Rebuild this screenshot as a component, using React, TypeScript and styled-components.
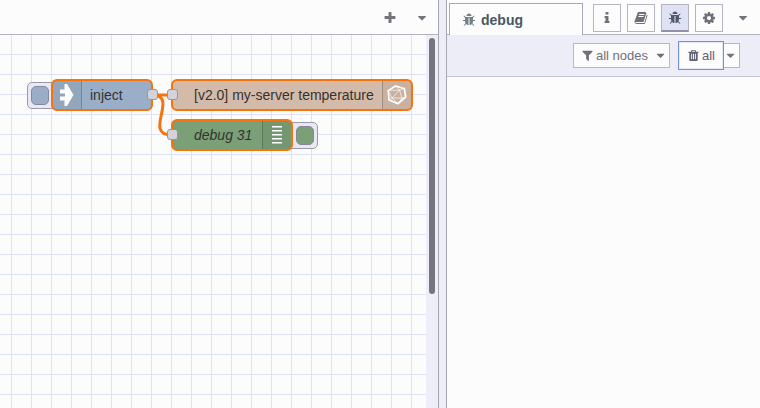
import React from "react";
import styled, { createGlobalStyle } from "styled-components";

const GlobalStyle = createGlobalStyle`
  *, *::before, *::after { box-sizing: border-box; }
  body { margin: 0; background: #fcfcfc; font-family: "Liberation Sans", Arial, sans-serif; }
`;

const paths = {
  plus: "M1600 736v192q0 40-28 68t-68 28h-416v416q0 40-28 68t-68 28h-192q-40 0-68-28t-28-68v-416h-416q-40 0-68-28t-28-68v-192q0-40 28-68t68-28h416v-416q0-40 28-68t68-28h192q40 0 68 28t28 68v416h416q40 0 68 28t28 68z",
  caret: "M1408 704q0 26-19 45l-448 448q-19 19-45 19t-45-19l-448-448q-19-19-19-45t19-45 45-19h896q26 0 45 19t19 45z",
  bug: "M1696 960q0 26-19 45t-45 19h-224q0 171-67 290l208 209q19 19 19 45t-19 45q-18 19-45 19t-45-19l-198-197q-5 5-15 13t-42 28.5-65 36.5-82 29-97 13v-896h-128v896q-51 0-101.5-13.5t-87-33-66-39-43.5-32.5l-15-14-183 207q-20 21-48 21-24 0-43-16-19-18-20.5-44.5t15.5-46.5l202-227q-58-114-58-274h-224q-26 0-45-19t-19-45 19-45 45-19h224v-294l-173-173q-19-19-19-45t19-45 45-19 45 19l173 173h844l173-173q19-19 45-19t45 19 19 45-19 45l-173 173v294h224q26 0 45 19t19 45zm-480-576h-640q0-133 93.5-226.5t226.5-93.5 226.5 93.5 93.5 226.5z",
  info: "M1216 1344v128q0 26-19 45t-45 19h-512q-26 0-45-19t-19-45v-128q0-26 19-45t45-19h64v-384h-64q-26 0-45-19t-19-45v-128q0-26 19-45t45-19h384q26 0 45 19t19 45v576h64q26 0 45 19t19 45zm-128-1152v192q0 26-19 45t-45 19h-256q-26 0-45-19t-19-45v-192q0-26 19-45t45-19h256q26 0 45 19t19 45z",
  cog: "M1152 896q0-106-75-181t-181-75-181 75-75 181 75 181 181 75 181-75 75-181zm512-109v222q0 12-8 23t-20 13l-185 28q-19 54-39 91 35 50 107 138 10 12 10 25t-9 23q-27 37-99 108t-94 71q-12 0-26-9l-138-108q-44 23-91 38-16 136-29 186-7 28-36 28h-222q-14 0-24.5-8.5t-11.5-21.5l-28-184q-49-16-90-37l-141 107q-10 9-25 9-14 0-25-11-126-114-165-168-7-10-7-23 0-12 8-23 15-21 51-66.5t54-70.5q-27-50-41-99l-183-27q-13-2-21-12.5t-8-23.5v-222q0-12 8-23t19-13l186-28q14-46 39-92-40-57-107-138-10-12-10-24 0-10 9-23 26-36 98.5-107.5t94.5-71.5q13 0 26 10l138 107q44-23 91-38 16-136 29-186 7-28 36-28h222q14 0 24.5 8.5t11.5 21.5l28 184q49 16 90 37l142-107q9-9 24-9 13 0 25 10 129 119 165 170 7 8 7 22 0 12-8 23-15 21-51 66.5t-54 70.5q26 50 41 98l183 28q13 2 21 12.5t8 23.5z",
  trash: "M704 1376v-704q0-14-9-23t-23-9h-64q-14 0-23 9t-9 23v704q0 14 9 23t23 9h64q14 0 23-9t9-23zm256 0v-704q0-14-9-23t-23-9h-64q-14 0-23 9t-9 23v704q0 14 9 23t23 9h64q14 0 23-9t9-23zm256 0v-704q0-14-9-23t-23-9h-64q-14 0-23 9t-9 23v704q0 14 9 23t23 9h64q14 0 23-9t9-23zm-544-992h448l-48-117q-7-9-17-11h-317q-10 2-17 11zm928 32v64q0 14-9 23t-23 9h-96v948q0 83-47 143.5t-113 60.5h-832q-66 0-113-58.5t-47-141.5v-952h-96q-14 0-23-9t-9-23v-64q0-14 9-23t23-9h309l70-167q15-37 54-63t79-26h320q40 0 79 26t54 63l70 167h309q14 0 23 9t9 23z",
  filter: "M1595 295q17 41-14 70l-493 493v742q0 42-39 59-13 5-25 5-27 0-45-19l-256-256q-19-19-19-45v-486l-493-493q-31-29-14-70 17-39 59-39h1280q42 0 59 39z",
  book: "M1703 478q40 57 18 129l-275 906q-19 64-76.5 107.5t-122.5 43.5h-923q-77 0-148.5-53.5t-99.5-131.5q-24-67-2-127 0-4 3-27t4-37q1-8-3-21.5t-3-19.5q2-11 8-21t16.5-23.5 16.5-23.5q23-38 45-91.5t30-91.5q3-10 .5-30t-.5-28q3-11 17-28t17-23q21-36 42-92t25-90q1-9-2.5-32t.5-28q4-13 22-30.5t22-22.5q19-26 42.5-84.5t27.5-96.5q1-8-3-25.5t-2-26.5q2-8 9-18t18-23 17-21q8-12 16.5-30.5t15-35 16-36 19.5-32 26.5-23.5 36-11.5 47.5 5.5l-1 3q38-9 51-9h761q74 0 114 56t18 130l-274 906q-36 119-71.5 153.5t-128.5 34.5h-869q-27 0-38 15-11 16-1 43 24 70 144 70h923q29 0 56-15.5t35-41.5l300-987q7-22 5-57 38 15 59 43zm-1064 2q-4 13 2 22.5t20 9.5h608q13 0 25.5-9.5t16.5-22.5l21-64q4-13-2-22.5t-20-9.5h-608q-13 0-25.5 9.5t-16.5 22.5zm-83 256q-4 13 2 22.5t20 9.5h608q13 0 25.5-9.5t16.5-22.5l21-64q4-13-2-22.5t-20-9.5h-608q-13 0-25.5 9.5t-16.5 22.5z",
};

const Glyph = styled.svg`
  display: block;
  flex: none;
  fill: currentColor;
`;

function Icon({ name, size = 14 }: { name: keyof typeof paths; size?: number }) {
  return (
    <Glyph width={size} height={size} viewBox="0 0 1792 1792" aria-hidden="true">
      <path d={paths[name]} />
    </Glyph>
  );
}

const Editor = styled.div`
  display: grid;
  grid-template-columns: 438px 9px 1fr;
  width: 760px;
  height: 408px;
  overflow: hidden;
`;

const Workspace = styled.main`
  display: flex;
  flex-direction: column;
  min-width: 0;
`;

const WorkspaceTabs = styled.header`
  display: flex;
  align-items: center;
  justify-content: flex-end;
  height: 35px;
  flex: none;
  border-bottom: 1px solid #b3b3c0;
  color: #74747f;
`;

const TabAction = styled.button`
  display: flex;
  align-items: center;
  justify-content: center;
  width: 32px;
  height: 34px;
  padding: 2px 0 0;
  border: 0;
  background: none;
  color: inherit;
`;

const WorkspaceBody = styled.div`
  display: flex;
  flex: 1;
`;

const Canvas = styled.div`
  position: relative;
  width: 426px;
  background-color: #fcfcfc;
  background-image:
    linear-gradient(to right, #e0e1ee 1px, transparent 1px),
    linear-gradient(to bottom, #dde2f6 1px, transparent 1px);
  background-size: 20px 20px;
  background-position: 11px 19px;
`;

const ScrollTrack = styled.div`
  width: 12px;
  padding: 3px 3px 0;
  background: #eeeef8;
`;

const ScrollThumb = styled.div`
  width: 6px;
  height: 256px;
  border-radius: 3px;
  background: #757580;
`;

const Separator = styled.div`
  border: solid #a6a6b3;
  border-width: 0 1px;
  background: #ededf8;
`;

const FlowNode = styled.div<{ $x: number; $y: number; $w: number; $fill: string }>`
  position: absolute;
  left: ${(p) => p.$x}px;
  top: ${(p) => p.$y}px;
  display: flex;
  width: ${(p) => p.$w}px;
  height: 32px;
  border: 2px solid #f8730c;
  border-radius: 6px;
  background: ${(p) => p.$fill};
`;

const NodeIcon = styled.div<{ $side: "left" | "right" }>`
  display: flex;
  align-items: center;
  justify-content: center;
  width: 29px;
  flex: none;
  background: rgba(0, 0, 0, 0.05);
  border-${(p) => (p.$side === "left" ? "right" : "left")}: 1px solid rgba(0, 0, 0, 0.2);
  border-radius: ${(p) => (p.$side === "left" ? "4px 0 0 4px" : "0 4px 4px 0")};
`;

const NodeLabel = styled.span<{ $indent: number; $italic?: boolean }>`
  flex: 1;
  padding-left: ${(p) => p.$indent}px;
  font-size: 14px;
  line-height: 28px;
  font-style: ${(p) => (p.$italic ? "italic" : "normal")};
  color: #333;
  white-space: nowrap;
`;

const Port = styled.i<{ $x: number; $y: number }>`
  position: absolute;
  left: ${(p) => p.$x}px;
  top: ${(p) => p.$y}px;
  width: 11px;
  height: 11px;
  border: 1px solid #96969e;
  border-radius: 3px;
  background: #d5d3da;
`;

const NodeButton = styled.button<{ $x: number; $y: number; $fill: string; $side: "left" | "right" }>`
  position: absolute;
  left: ${(p) => p.$x}px;
  top: ${(p) => p.$y}px;
  display: flex;
  align-items: center;
  width: 32px;
  height: 27px;
  padding: 0 0 0 ${(p) => (p.$side === "left" ? 3 : 9)}px;
  border: 1px solid #9999a8;
  border-radius: 5px;
  background: #e8e8f5;

  &::before {
    content: "";
    width: 18px;
    height: 19px;
    border: 1px solid #85899a;
    border-radius: 5px;
    background: ${(p) => p.$fill};
  }
`;

const Wires = styled.svg`
  position: absolute;
  left: 0;
  top: 0;
  pointer-events: none;
`;

const Sidebar = styled.aside`
  display: flex;
  flex-direction: column;
  min-width: 0;
`;

const SidebarTabs = styled.header`
  display: flex;
  height: 35px;
  flex: none;
  padding-left: 2px;
  box-shadow: inset 0 -1px #b3b3c0;
`;

const ActiveTab = styled.div`
  display: flex;
  align-items: center;
  gap: 5px;
  width: 134px;
  height: 32px;
  margin-top: 3px;
  padding-left: 12px;
  border: 1px solid #a9a9b8;
  border-bottom: 0;
  background: #fcfcfc;
  color: #73808a;
`;

const TabTitle = styled.span`
  font-size: 14px;
  font-weight: 700;
  line-height: 30px;
  color: #4a5763;
`;

const TabButtons = styled.nav`
  display: flex;
  gap: 6px;
  padding: 4px 0 0 10px;
`;

const TabButton = styled.button<{ $active?: boolean }>`
  display: flex;
  align-items: center;
  justify-content: center;
  width: 28px;
  height: 28px;
  padding: 0;
  border: 1px solid #b5b5c2;
  border-bottom: ${(p) => (p.$active ? "2px solid #9192a5" : "1px solid #b5b5c2")};
  background: ${(p) => (p.$active ? "#dfe1f4" : "#fcfcfc")};
  color: ${(p) => (p.$active ? "#525969" : "#70707a")};
`;

const TabMenu = styled(TabAction)`
  width: 26px;
  margin-left: 7px;
  color: #74747f;
`;

const Toolbar = styled.div`
  display: flex;
  align-items: center;
  justify-content: flex-end;
  gap: 8px;
  height: 42px;
  flex: none;
  padding-right: 20px;
  border-bottom: 1px solid #c5c5d5;
  background: #ededf8;
`;

const FilterButton = styled.button`
  display: flex;
  align-items: center;
  width: 97px;
  height: 25px;
  padding: 0 2px 0 7px;
  border: 1px solid #b8b8c5;
  background: #fcfcfc;
  color: #70707b;
  font: 13px/23px "Liberation Sans", Arial, sans-serif;
`;

const FilterText = styled.span`
  flex: 1;
  padding-left: 2px;
  text-align: left;
  white-space: nowrap;
`;

const ClearGroup = styled.div`
  display: flex;
  align-items: center;
`;

const ClearButton = styled.button`
  display: flex;
  align-items: center;
  gap: 2px;
  width: 46px;
  height: 29px;
  padding: 0 0 0 8px;
  border: 1px solid #8b8fa3;
  border-left-color: #6f94d8;
  background: #fcfcfc;
  box-shadow: inset 0 0 0 1px #e3e9f7;
  color: #5d6070;
  font: 13px/23px "Liberation Sans", Arial, sans-serif;
`;

const ClearMenu = styled.button`
  display: flex;
  align-items: center;
  width: 16px;
  height: 25px;
  padding: 0;
  border: 1px solid #b8b8c5;
  border-left: 0;
  background: #fcfcfc;
  color: #74747f;
`;

function InjectArrow() {
  return (
    <svg width="28" height="28" viewBox="0 0 28 28" fill="#fff">
      <path d="M7 8.5h4.5V3H14l6.5 11L14 25h-2.500v-5.500H7v-4h5v-3H7z" />
    </svg>
  );
}

function Polyhedron() {
  return (
    <svg width="20" height="20" viewBox="0 0 20 20" fill="none" stroke="#fff" strokeLinejoin="round">
      <path strokeWidth="1.7" d="M8.500 1 17.300 3.500 18.700 12 11 18.700 2 15 1.200 5.600z" />
      <path strokeWidth=".9" d="M12.500 5 5 13 15 13zM8.500 1 12.500 5 17.300 3.500M1.200 5.600 12.500 5M1.200 5.600 5 13 2 15M5 13 11 18.700 15 13 18.700 12" strokeOpacity=".75" />
    </svg>
  );
}

function DebugLines() {
  return (
    <svg width="12" height="20" viewBox="0 0 12 20" fill="#fff">
      {[1, 5, 9, 13, 17].map((y) => (
        <rect key={y} x="1" y={y} width="10" height="1.5" />
      ))}
    </svg>
  );
}

export default function App() {
  return (
    <>
      <GlobalStyle />
      <Editor>
        <Workspace>
          <WorkspaceTabs>
            <TabAction aria-label="Add flow"><Icon name="plus" /></TabAction>
            <TabAction aria-label="List flows"><Icon name="caret" /></TabAction>
          </WorkspaceTabs>
          <WorkspaceBody>
            <Canvas>
              <NodeButton $x={27} $y={47} $fill="#9aafc7" $side="left" aria-label="Inject" />
              <NodeButton $x={286} $y={87} $fill="#7b9f76" $side="right" aria-label="Toggle debug" />
              <FlowNode $x={51} $y={44} $w={102} $fill="#9aafc7">
                <NodeIcon $side="left"><InjectArrow /></NodeIcon>
                <NodeLabel $indent={8}>inject</NodeLabel>
              </FlowNode>
              <FlowNode $x={171} $y={44} $w={242} $fill="#d4baa8">
                <NodeLabel $indent={21}>[v2.0] my-server temperature</NodeLabel>
                <NodeIcon $side="right"><Polyhedron /></NodeIcon>
              </FlowNode>
              <FlowNode $x={171} $y={84} $w={122} $fill="#7b9f76">
                <NodeLabel $indent={21} $italic>debug 31</NodeLabel>
                <NodeIcon $side="right"><DebugLines /></NodeIcon>
              </FlowNode>
              <Wires width="426" height="373" fill="none" stroke="#f8730c" strokeWidth="3">
                <path d="M152 60H172M152 60C180 60 142 100 172 100" />
              </Wires>
              <Port $x={147} $y={54} />
              <Port $x={167} $y={54} />
              <Port $x={167} $y={94} />
            </Canvas>
            <ScrollTrack><ScrollThumb /></ScrollTrack>
          </WorkspaceBody>
        </Workspace>
        <Separator />
        <Sidebar>
          <SidebarTabs>
            <ActiveTab><Icon name="bug" /><TabTitle>debug</TabTitle></ActiveTab>
            <TabButtons>
              <TabButton aria-label="Information"><Icon name="info" /></TabButton>
              <TabButton aria-label="Help"><Icon name="book" /></TabButton>
              <TabButton $active aria-label="Debug"><Icon name="bug" /></TabButton>
              <TabButton aria-label="Configuration"><Icon name="cog" /></TabButton>
            </TabButtons>
            <TabMenu aria-label="More tabs"><Icon name="caret" /></TabMenu>
          </SidebarTabs>
          <Toolbar>
            <FilterButton>
              <Icon name="filter" size={13} />
              <FilterText>all nodes</FilterText>
              <Icon name="caret" size={13} />
            </FilterButton>
            <ClearGroup>
              <ClearButton><Icon name="trash" size={13} />all</ClearButton>
              <ClearMenu aria-label="Clear options"><Icon name="caret" size={13} /></ClearMenu>
            </ClearGroup>
          </Toolbar>
        </Sidebar>
      </Editor>
    </>
  );
}
